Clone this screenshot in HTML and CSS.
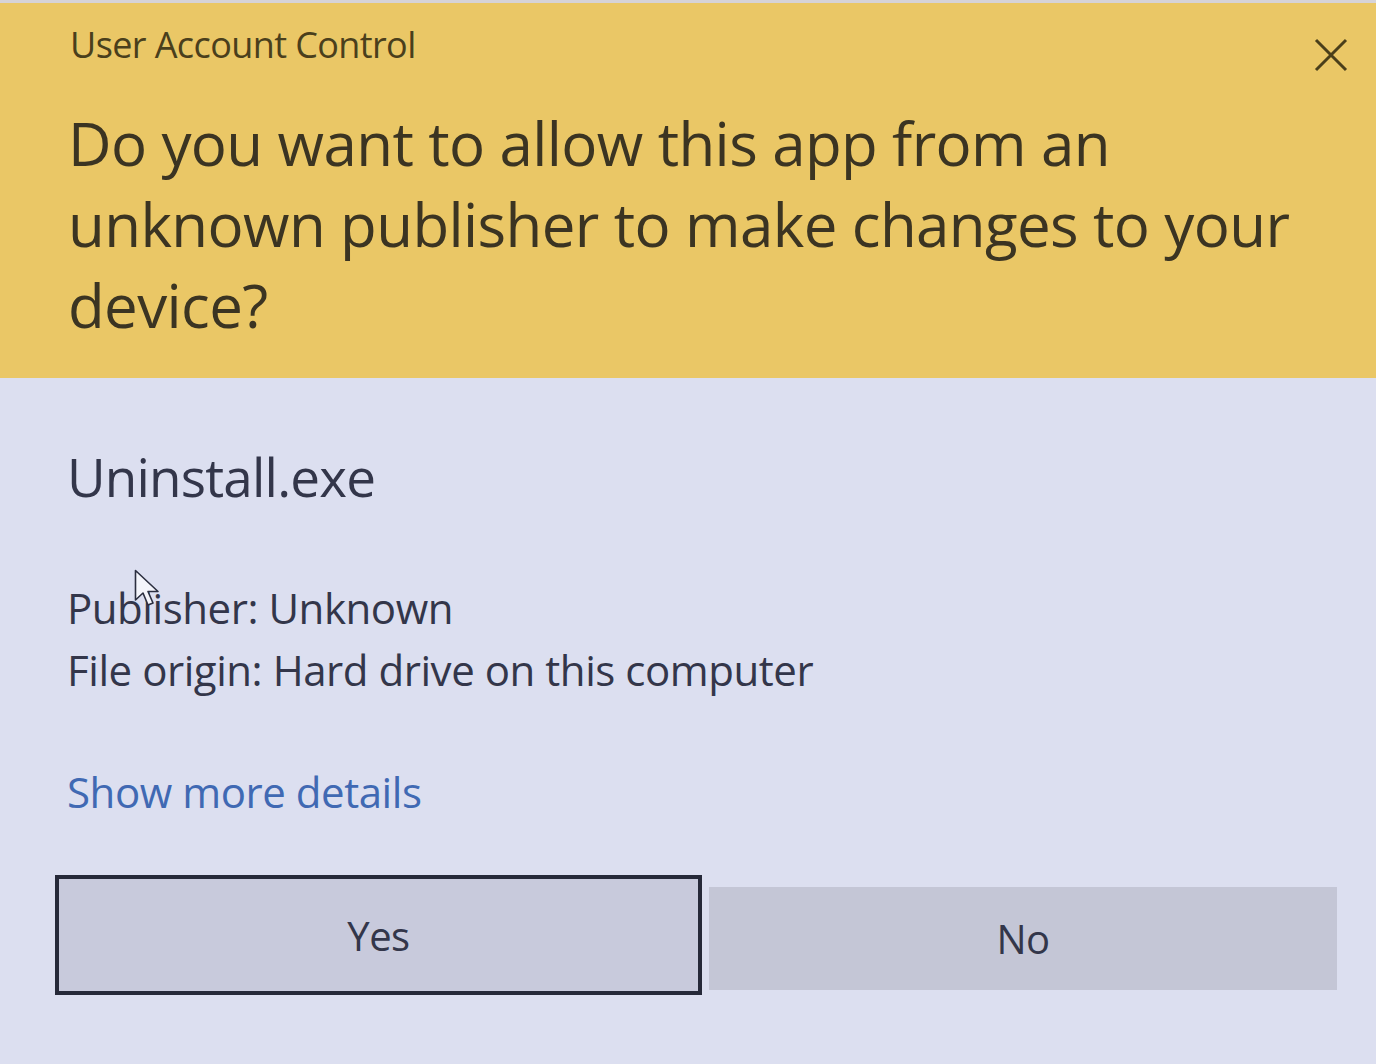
FILE: index.html
```html
<!DOCTYPE html>
<html lang="en">
<head>
<meta charset="utf-8">
<title>User Account Control</title>
<link rel="stylesheet" href="styles.css">
</head>
<body>
<div class="dialog">
  <header class="header">
    <div class="title-bar">
      <span class="app-title">User Account Control</span>
      <svg class="close" width="34" height="34" viewBox="0 0 34 34" aria-hidden="true">
        <path d="M2 2 L32 32 M32 2 L2 32" stroke="#4a3f1a" stroke-width="3" fill="none"/>
      </svg>
    </div>
    <h1 class="question">Do you want to allow this app from an unknown publisher to make changes to your device?</h1>
  </header>
  <main class="content">
    <h2 class="program">Uninstall.exe</h2>
    <div class="details">
      <p class="detail">Publisher: Unknown</p>
      <p class="detail">File origin: Hard drive on this computer</p>
      <svg class="cursor" width="34" height="42" viewBox="0 0 34 42" aria-hidden="true">
        <path d="M1.5 1.5 L1.5 31 L9 24 L14 36 L19 34 L14 22.5 L24 22.5 Z" fill="#f4f5fb" stroke="#2c2f40" stroke-width="1.6" stroke-linejoin="round"/>
      </svg>
    </div>
    <a class="more" href="#">Show more details</a>
    <div class="buttons">
      <button class="btn btn-yes">Yes</button>
      <button class="btn btn-no">No</button>
    </div>
  </main>
</div>
</body>
</html>
```
FILE: styles.css
```css
html, body {
  margin: 0;
  padding: 0;
}
body {
  background: #dcdff0;
  font-family: "Open Sans", "Noto Sans", sans-serif;
  width: 1376px;
  height: 1064px;
  overflow: hidden;
}
.dialog {
  display: flex;
  flex-direction: column;
}
.header {
  background: #eac766;
  height: 378px;
  box-sizing: border-box;
  padding: 20px 28px 0 70px;
  border-top: 3px solid #d6d3d8;
}
.title-bar {
  display: flex;
  justify-content: space-between;
  align-items: flex-start;
}
.app-title {
  font-size: 36px;
  line-height: 44px;
  color: #4a3f1c;
  letter-spacing: -0.6px;
}
.close {
  margin-top: 15px;
}
.question {
  margin: 31px 0 0 -2px;
  font-weight: 400;
  font-size: 60px;
  line-height: 81px;
  color: #3b3422;
  max-width: 1240px;
  letter-spacing: -0.6px;
}
.content {
  padding: 0 39px 0 55px;
  display: flex;
  flex-direction: column;
}
.program {
  margin: 67px 0 0 12px;
  font-weight: 400;
  font-size: 53px;
  line-height: 64px;
  color: #33364a;
  letter-spacing: -0.8px;
}
.details {
  position: relative;
  margin: 68px 0 0 12px;
}
.detail {
  margin: 0;
  font-size: 42px;
  line-height: 62px;
  color: #33364a;
  letter-spacing: -0.45px;
}
.cursor {
  position: absolute;
  left: 67px;
  top: -8px;
}
.more {
  margin: 60px 0 0 12px;
  font-size: 42px;
  line-height: 62px;
  color: #4069b3;
  text-decoration: none;
  letter-spacing: -0.45px;
  align-self: flex-start;
}
.buttons {
  display: flex;
  align-items: center;
  gap: 7px;
  margin-top: 52px;
}
.btn {
  font-family: inherit;
  font-size: 40px;
  color: #33364a;
  border: none;
  padding: 0;
  letter-spacing: -0.5px;
}
.btn-yes {
  width: 647px;
  height: 120px;
  background: #c8cadc;
  border: 4px solid #262939;
  box-sizing: border-box;
}
.btn-no {
  width: 628px;
  height: 103px;
  background: #c4c6d6;
  margin-top: 7px;
}
```
